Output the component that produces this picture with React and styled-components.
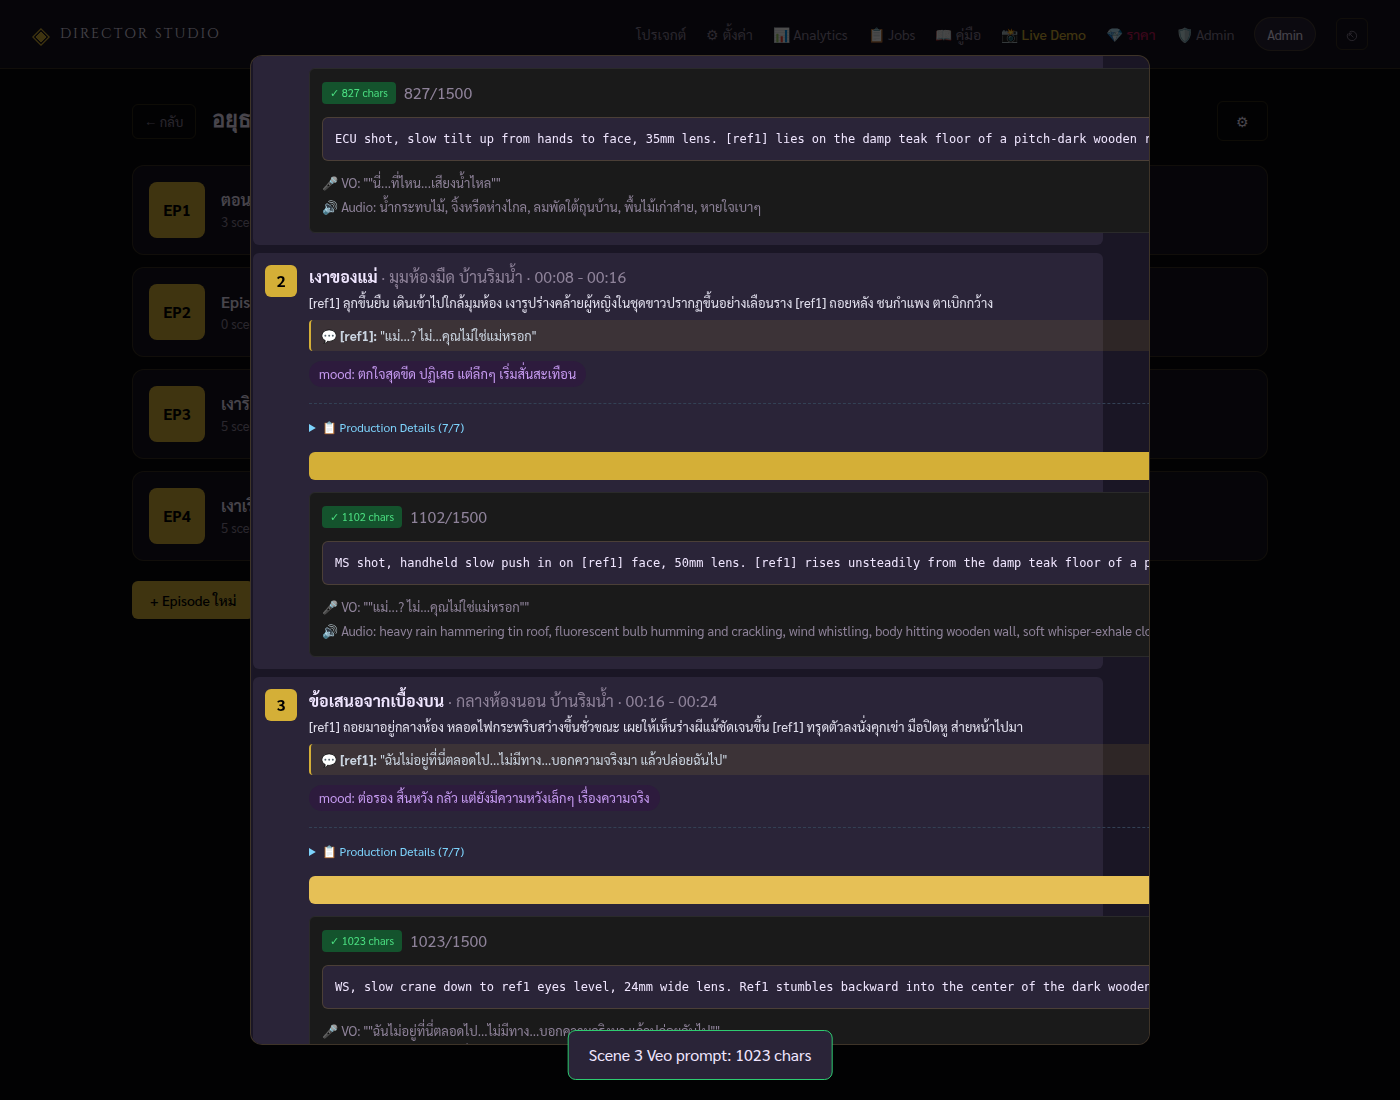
import React from 'react'
import styled, { createGlobalStyle, ThemeProvider } from 'styled-components'

const theme = {
  colors: {
    bg: '#08080d',
    surface: '#14121e',
    modal: '#1a1625',
    card: '#2a2438',
    gold: '#d4af37',
    goldLight: '#e6c056',
    text: '#f0e6ff',
    muted: '#8e8299',
    line: 'rgba(212, 175, 55, 0.2)',
  },
}

const GlobalStyle = createGlobalStyle`
  * {
    box-sizing: border-box;
  }
  body {
    margin: 0;
    min-height: 100vh;
    background: ${theme.colors.bg};
    color: ${theme.colors.text};
    font-family: Sarabun, "Noto Sans Thai", "Open Sans", "Noto Sans", sans-serif;
    font-size: 16px;
    line-height: 26px;
    overflow: hidden;
  }
  button {
    font-family: inherit;
    cursor: pointer;
  }
  p, h1, h2, h3 {
    margin: 0;
  }
`

const Header = styled.header`
  display: flex;
  align-items: center;
  justify-content: space-between;
  height: 69px;
  padding: 0 32px;
  background: ${({ theme }) => theme.colors.surface};
  border-bottom: 1px solid ${({ theme }) => theme.colors.line};
`

const Brand = styled.a`
  display: flex;
  align-items: center;
  gap: 10px;
  color: ${({ theme }) => theme.colors.text};
  font-family: Cinzel, "Liberation Serif", serif;
  font-size: 14px;
  letter-spacing: 0.15em;
  text-decoration: none;
  white-space: nowrap;

  svg {
    width: 18px;
    height: 18px;
    margin-top: 6px;
    color: ${({ theme }) => theme.colors.gold};
  }
`

const Nav = styled.nav`
  display: flex;
  align-items: center;
  gap: 20px;
`

const NavLink = styled.a`
  color: ${({ $color, theme }) => $color || theme.colors.muted};
  font-size: 14px;
  font-weight: ${({ $color }) => ($color ? 500 : 400)};
  text-decoration: none;
  white-space: nowrap;
`

const UserPill = styled.button`
  height: 34px;
  padding: 0 12px;
  border: 1px solid ${({ theme }) => theme.colors.line};
  border-radius: 17px;
  background: ${({ theme }) => theme.colors.card};
  color: ${({ theme }) => theme.colors.text};
  font-size: 13px;
`

const IconButton = styled.button`
  display: flex;
  align-items: center;
  justify-content: center;
  width: ${({ $wide }) => ($wide ? '51px' : '32px')};
  height: ${({ $wide }) => ($wide ? '40px' : '32px')};
  padding: 0;
  border: 1px solid ${({ theme }) => theme.colors.line};
  border-radius: 6px;
  background: transparent;
  color: ${({ $wide, theme }) => ($wide ? theme.colors.text : theme.colors.muted)};
  font-size: 14px;

  svg {
    width: 12px;
    height: 12px;
    margin-top: 4px;
  }
`

const Main = styled.main`
  max-width: 1200px;
  margin: 0 auto;
  padding: 32px;
`

const PageHead = styled.div`
  display: flex;
  align-items: center;
  gap: 16px;
  margin-bottom: 24px;

  h1 {
    flex: 1;
    font-family: Cinzel, serif;
    font-size: 22px;
    line-height: 32px;
    white-space: nowrap;
  }
`

const BackButton = styled.button`
  height: 35px;
  padding: 0 12px;
  border: 1px solid ${({ theme }) => theme.colors.line};
  border-radius: 6px;
  background: transparent;
  color: ${({ theme }) => theme.colors.muted};
  font-size: 13px;
`

const EpisodeList = styled.div`
  display: flex;
  flex-direction: column;
  gap: 12px;
  margin-bottom: 20px;
`

const Episode = styled.article`
  display: flex;
  align-items: center;
  gap: 16px;
  height: 90px;
  padding: 16px;
  border: 1px solid ${({ theme }) => theme.colors.line};
  border-radius: 12px;
  background: ${({ theme }) => theme.colors.surface};

  h3 {
    font-size: 16px;
    line-height: 24px;
    font-weight: 600;
  }
  p {
    color: ${({ theme }) => theme.colors.muted};
    font-size: 13px;
    line-height: 20px;
  }
`

const EpisodeBadge = styled.div`
  display: flex;
  align-items: center;
  justify-content: center;
  width: 56px;
  height: 56px;
  border-radius: 8px;
  background: ${({ theme }) => theme.colors.gold};
  color: #000;
  font-weight: 700;
`

const AddButton = styled.button`
  height: 38px;
  padding: 0 18px;
  border: 0;
  border-radius: 6px;
  background: ${({ theme }) => theme.colors.gold};
  color: #000;
  font-size: 14px;
  font-weight: 500;
`

const Overlay = styled.div`
  position: fixed;
  inset: 0;
  display: flex;
  align-items: center;
  justify-content: center;
  background: rgba(0, 0, 0, 0.7);
`

const Modal = styled.div`
  width: 90%;
  max-width: 900px;
  height: 90vh;
  overflow: hidden;
  border: 1px solid rgba(212, 175, 55, 0.2);
  border-radius: 12px;
  background: ${({ theme }) => theme.colors.modal};
`

const SceneList = styled.div`
  display: flex;
  flex-direction: column;
  gap: 8px;
  padding: 0 46px 24px 2px;
`

const Scene = styled.section`
  display: flex;
  gap: 12px;
  padding: 12px;
  border-radius: ${({ $continued }) => ($continued ? '0 0 6px 6px' : '6px')};
  background: ${({ theme }) => theme.colors.card};
`

const SceneNumber = styled.div`
  flex: 0 0 32px;
  height: ${({ $empty }) => ($empty ? '0' : '32px')};
  border-radius: 6px;
  background: ${({ theme }) => theme.colors.gold};
  color: #000;
  font-weight: 700;
  line-height: 32px;
  text-align: center;
`

const SceneBody = styled.div`
  flex: 0 0 120%;
  white-space: nowrap;
`

const SceneTitle = styled.div`
  margin-bottom: 2px;
  color: ${({ theme }) => theme.colors.muted};
  line-height: 24px;

  strong {
    color: ${({ theme }) => theme.colors.text};
  }
`

const Description = styled.p`
  margin-bottom: 5px;
  color: #e2e0ee;
  font-size: 13px;
  line-height: 24px;
`

const Dialogue = styled.div`
  margin-bottom: 10px;
  padding: 4px 10px;
  border-left: 2px solid ${({ theme }) => theme.colors.gold};
  border-radius: 4px;
  background: rgba(212, 175, 55, 0.11);
  color: #cbd5e1;
  font-size: 13px;
  line-height: 23px;
`

const Mood = styled.div`
  width: fit-content;
  margin-bottom: 16px;
  padding: 3px 10px;
  border-radius: 13px;
  background: #2d1b3d;
  color: #c79bf2;
  font-size: 13px;
  line-height: 20px;
`

const Production = styled.details`
  padding: 12px 0 14px;
  border-top: 1px dashed #334155;
  color: #7dd3fc;
  font-size: 12px;
  line-height: 22px;
`

const GenerateButton = styled.button`
  display: block;
  width: 100%;
  height: 28px;
  margin-bottom: 12px;
  border: 0;
  border-radius: 6px;
  background: ${({ $active, theme }) => ($active ? theme.colors.goldLight : theme.colors.gold)};
`

const PromptPanel = styled.div`
  padding: 12px 12px 13px;
  border: 1px solid #2a2a2a;
  border-radius: 6px;
  background: #1a1a1a;
  color: ${({ theme }) => theme.colors.muted};
`

const PromptHead = styled.div`
  display: flex;
  align-items: center;
  gap: 8px;
  height: 24px;
  margin-bottom: 12px;
`

const CharBadge = styled.span`
  padding: 0 8px;
  border-radius: 4px;
  background: #14532d;
  color: #4ade80;
  font-size: 11px;
  line-height: 22px;
`

const Prompt = styled.pre`
  margin: 0 0 10px;
  padding: 12px;
  border: 1px solid rgba(212, 175, 55, 0.2);
  border-radius: 6px;
  background: ${({ theme }) => theme.colors.card};
  color: ${({ theme }) => theme.colors.text};
  font-family: "DejaVu Sans Mono", monospace;
  font-size: 12px;
  line-height: 18px;
`

const Sound = styled.p`
  font-size: 13px;
  line-height: 24px;
`

const Toast = styled.div`
  position: fixed;
  bottom: 20px;
  left: 50%;
  transform: translateX(-50%);
  padding: 11px 20px;
  border: 1px solid #2ecc71;
  border-radius: 8px;
  background: ${({ theme }) => theme.colors.card};
  white-space: nowrap;
`

const links = [
  { label: 'โปรเจกต์' },
  { label: '⚙ ตั้งค่า' },
  { label: '📊 Analytics' },
  { label: '📋 Jobs' },
  { label: '📖 คู่มือ' },
  { label: '📸 Live Demo', color: '#d4af37' },
  { label: '💎 ราคา', color: '#c2185b' },
  { label: '🛡️ Admin' },
]

const episodes = [
  { title: 'ตอน', scenes: 3 },
  { title: 'Episode', scenes: 0 },
  { title: 'เงาริ', scenes: 5 },
  { title: 'เงาเรื', scenes: 5 },
]

const scenes = [
  {
    id: 1,
    chars: 827,
    prompt: 'ECU shot, slow tilt up from hands to face, 35mm lens. [ref1] lies on the damp teak floor of a pitch-dark wooden room',
    vo: 'นี่...ที่ไหน...เสียงน้ำไหล',
    audio: 'น้ำกระทบไม้, จิ้งหรีดห่างไกล, ลมพัดใต้ถุนบ้าน, พื้นไม้เก่าส่าย, หายใจเบาๆ',
  },
  {
    id: 2,
    title: 'เงาของแม่',
    place: 'มุมห้องมืด บ้านริมน้ำ',
    time: '00:08 - 00:16',
    description: '[ref1] ลุกขึ้นยืน เดินเข้าไปใกล้มุมห้อง เงารูปร่างคล้ายผู้หญิงในชุดขาวปรากฏขึ้นอย่างเลือนราง [ref1] ถอยหลัง ชนกำแพง ตาเบิกกว้าง',
    vo: 'แม่...? ไม่...คุณไม่ใช่แม่หรอก',
    mood: 'ตกใจสุดขีด ปฏิเสธ แต่ลึกๆ เริ่มสั่นสะเทือน',
    chars: 1102,
    prompt: 'MS shot, handheld slow push in on [ref1] face, 50mm lens. [ref1] rises unsteadily from the damp teak floor of a pitch-dark',
    audio: 'heavy rain hammering tin roof, fluorescent bulb humming and crackling, wind whistling, body hitting wooden wall, soft whisper-exhale close',
  },
  {
    id: 3,
    title: 'ข้อเสนอจากเบื้องบน',
    place: 'กลางห้องนอน บ้านริมน้ำ',
    time: '00:16 - 00:24',
    description: '[ref1] ถอยมาอยู่กลางห้อง หลอดไฟกระพริบสว่างขึ้นชั่วขณะ เผยให้เห็นร่างผีแม้ชัดเจนขึ้น [ref1] ทรุดตัวลงนั่งคุกเข่า มือปิดหู ส่ายหน้าไปมา',
    vo: 'ฉันไม่อยู่ที่นี่ตลอดไป...ไม่มีทาง...บอกความจริงมา แล้วปล่อยฉันไป',
    mood: 'ต่อรอง สิ้นหวัง กลัว แต่ยังมีความหวังเล็กๆ เรื่องความจริง',
    chars: 1023,
    active: true,
    prompt: 'WS, slow crane down to ref1 eyes level, 24mm wide lens. Ref1 stumbles backward into the center of the dark wooden',
    audio: 'เสียงฝนตกหนักที่หลังคา',
  },
]

function SceneCard({ scene }) {
  return (
    <Scene $continued={!scene.title}>
      <SceneNumber $empty={!scene.title}>{scene.title && scene.id}</SceneNumber>
      <SceneBody>
        {scene.title && (
          <>
            <SceneTitle>
              <strong>{scene.title}</strong> · {scene.place} · {scene.time}
            </SceneTitle>
            <Description>{scene.description}</Description>
            <Dialogue>💬 <strong>[ref1]:</strong> "{scene.vo}"</Dialogue>
            <Mood>mood: {scene.mood}</Mood>
            <Production>
              <summary>📋 Production Details (7/7)</summary>
            </Production>
            <GenerateButton $active={scene.active} aria-label={`Scene ${scene.id} Veo prompt`} />
          </>
        )}
        <PromptPanel>
          <PromptHead>
            <CharBadge>✓ {scene.chars} chars</CharBadge>
            <span>{scene.chars}/1500</span>
          </PromptHead>
          <Prompt>{scene.prompt}</Prompt>
          <Sound>🎤 VO: ""{scene.vo}""</Sound>
          <Sound>🔊 Audio: {scene.audio}</Sound>
        </PromptPanel>
      </SceneBody>
    </Scene>
  )
}

export default function App() {
  return (
    <ThemeProvider theme={theme}>
      <GlobalStyle />
      <Header>
        <Brand href="#">
          <svg viewBox="0 0 18 18" fill="none" stroke="currentColor">
            <path d="M9 .8 17.2 9 9 17.2.8 9Z" strokeWidth="1.2" />
            <path d="M9 4 14 9 9 14 4 9Z" fill="currentColor" />
          </svg>
          DIRECTOR STUDIO
        </Brand>
        <Nav>
          {links.map((link) => (
            <NavLink key={link.label} href="#" $color={link.color}>{link.label}</NavLink>
          ))}
          <UserPill>Admin</UserPill>
          <IconButton aria-label="Logout">
            <svg viewBox="0 0 12 12" fill="none" stroke="currentColor" strokeWidth="0.9">
              <path d="M3.6 1.9A4.7 4.7 0 1 1 1.9 3.6" />
              <path d="M7.4 7.4 3.2 3.2M3.2 6V3.2H6" />
            </svg>
          </IconButton>
        </Nav>
      </Header>
      <Main>
        <PageHead>
          <BackButton>← กลับ</BackButton>
          <h1>อยุธยา</h1>
          <IconButton $wide aria-label="Settings">⚙</IconButton>
        </PageHead>
        <EpisodeList>
          {episodes.map((episode, i) => (
            <Episode key={episode.title}>
              <EpisodeBadge>EP{i + 1}</EpisodeBadge>
              <div>
                <h3>{episode.title}</h3>
                <p>{episode.scenes} scenes</p>
              </div>
            </Episode>
          ))}
        </EpisodeList>
        <AddButton>+ Episode ใหม่</AddButton>
      </Main>
      <Overlay>
        <Modal role="dialog" aria-modal="true">
          <SceneList>
            {scenes.map((scene) => (
              <SceneCard key={scene.id} scene={scene} />
            ))}
          </SceneList>
        </Modal>
      </Overlay>
      <Toast role="status">Scene 3 Veo prompt: 1023 chars</Toast>
    </ThemeProvider>
  )
}
